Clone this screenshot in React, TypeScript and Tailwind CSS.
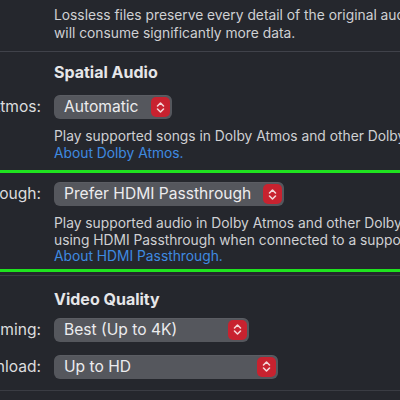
import React from "react";

const font = { fontFamily: "Inter, 'Noto Sans', 'Liberation Sans', sans-serif" };

function Stepper() {
  return (
    <div className="w-[19px] h-[20px] rounded-[5px] bg-[#c8222f] flex items-center justify-center shrink-0">
      <svg width="9" height="13" viewBox="0 0 9 13" fill="none">
        <path d="M1.5 5 L4.5 2 L7.5 5" stroke="#f4d6d8" strokeWidth="1.6" strokeLinecap="round" strokeLinejoin="round" />
        <path d="M1.5 8 L4.5 11 L7.5 8" stroke="#f4d6d8" strokeWidth="1.6" strokeLinecap="round" strokeLinejoin="round" />
      </svg>
    </div>
  );
}

function Select({ value, width }: { value: string; width: string }) {
  return (
    <div className={`${width} h-[24px] rounded-[6px] bg-[#55575d] flex items-center justify-between pl-[10px] pr-[2px] shadow-[0_0.5px_0_rgba(255,255,255,0.08)_inset]`}>
      <span className="text-[15.6px] text-[#ececee] whitespace-nowrap leading-none">{value}</span>
      <Stepper />
    </div>
  );
}

function Row({ label, children }: { label: string; children: React.ReactNode }) {
  return (
    <div className="flex items-center">
      <div className="w-[41px] shrink-0 flex justify-end">
        <span className="text-[15.6px] text-[#dcdcde] whitespace-nowrap">{label}</span>
      </div>
      <div className="ml-[13px]">{children}</div>
    </div>
  );
}

export default function App() {
  return (
    <div className="w-[400px] h-[400px] overflow-hidden bg-[#25272d] relative" style={font}>
      <div className="pl-[54px] pt-[6px] text-[13.8px] leading-[18px] text-[#cfd0d3] whitespace-nowrap">
        <div>Lossless files preserve every detail of the original audio. This</div>
        <div>will consume significantly more data.</div>
      </div>
      <div className="mt-[9px] h-px bg-[#40424a]" />
      <div className="mt-[10px] pl-[54px] text-[16px] leading-[20px] font-bold text-[#e6e6e8]">Spatial Audio</div>
      <div className="mt-[13px]">
        <Row label="Dolby Atmos:">
          <Select value="Automatic" width="w-[118px]" />
        </Row>
      </div>
      <div className="mt-[9px] pl-[54px] text-[13.8px] leading-[17px] text-[#cfd0d3] whitespace-nowrap">
        <div>Play supported songs in Dolby Atmos and other Dolby Audio formats.</div>
        <div className="text-[#3f8ae0]">About Dolby Atmos.</div>
      </div>
      <div className="mt-[8px] h-[3px] bg-[#1fe21f]" />
      <div className="mt-[9px]">
        <Row label="HDMI Passthrough:">
          <Select value="Prefer HDMI Passthrough" width="w-[230px]" />
        </Row>
      </div>
      <div className="mt-[9px] pl-[54px] text-[13.8px] leading-[16.5px] text-[#cfd0d3] whitespace-nowrap">
        <div>Play supported audio in Dolby Atmos and other Dolby Audio formats</div>
        <div>using HDMI Passthrough when connected to a supported device.</div>
        <div className="text-[#3f8ae0]">About HDMI Passthrough.</div>
      </div>
      <div className="mt-[4px] h-[3px] bg-[#1fe21f]" />
      <div className="mt-[3px] h-px bg-[#3a3c43]" />
      <div className="mt-[13px] pl-[54px] text-[16px] leading-[20px] font-bold text-[#e6e6e8]">Video Quality</div>
      <div className="mt-[9px]">
        <Row label="Streaming:">
          <Select value="Best (Up to 4K)" width="w-[195px]" />
        </Row>
      </div>
      <div className="mt-[13px]">
        <Row label="Download:">
          <Select value="Up to HD" width="w-[224px]" />
        </Row>
      </div>
      <div className="mt-[11px] h-px bg-[#3a3c43]" />
    </div>
  );
}
